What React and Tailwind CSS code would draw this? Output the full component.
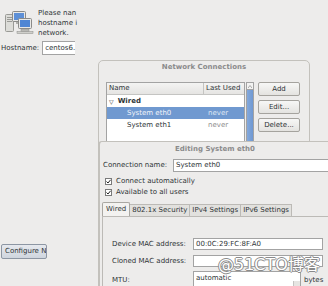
import React from 'react';

const NetIcon = () => (
  <svg width="30" height="26" viewBox="0 0 30 26">
    {/* server tower */}
    <rect x="1.5" y="5.5" width="8" height="17" rx="1" fill="#dcdcd8" stroke="#9a9a96" />
    <rect x="3" y="8" width="5" height="1" fill="#9a9a96" />
    <rect x="3" y="10" width="5" height="1" fill="#9a9a96" />
    <rect x="3" y="12" width="5" height="1" fill="#9a9a96" />
    {/* back monitor */}
    <rect x="8.5" y="2.5" width="13" height="10" rx="1" fill="#e8e8e6" stroke="#8a8a88" />
    <rect x="10" y="4" width="10" height="7" fill="#5d8fd6" />
    <rect x="12" y="13" width="6" height="2" fill="#b0b0ac" />
    {/* front monitor */}
    <rect x="14.5" y="9.5" width="13" height="10" rx="1" fill="#e8e8e6" stroke="#8a8a88" />
    <rect x="16" y="11" width="10" height="7" fill="#4f86d4" />
    <rect x="17" y="20" width="8" height="2.5" fill="#b8b8b4" stroke="#8a8a88" strokeWidth="0.5" />
    <rect x="13" y="22.5" width="16" height="2" fill="#cfcfcb" stroke="#8a8a88" strokeWidth="0.5" />
  </svg>
);

const Check = ({ label }) => (
  <div className="flex items-center h-[11px] pl-[5px]">
    <span className="w-[7px] h-[7px] shrink-0 border border-[#7a7a7a] bg-white flex items-center justify-center">
      <svg width="5" height="5" viewBox="0 0 5 5" className="block">
        <path d="M0.5 2.5 L2 4 L4.6 0.8" stroke="#222" strokeWidth="1" fill="none" />
      </svg>
    </span>
    <span className="ml-[4px]">{label}</span>
  </div>
);

const Btn = ({ children }) => (
  <div className="h-[14px] w-[42px] flex items-center justify-center rounded-[2px] border border-[#a5a39e] bg-gradient-to-b from-[#f7f7f6] to-[#e4e3e0]">
    {children}
  </div>
);

export default function App() {
  return (
    <div className="relative w-[328px] h-[286px] overflow-hidden bg-[#edeceb] text-[7px] text-[#2e3436] font-['DejaVu_Sans',sans-serif]">
      {/* installer page */}
      <div className="flex flex-col pl-[1px]">
        <div className="flex pt-[8px] pl-[3px]">
          <div className="pt-[1px]"><NetIcon /></div>
          <div className="ml-[4px] leading-[10px]">
            <div>Please nan</div>
            <div>hostname i</div>
            <div>network.</div>
          </div>
        </div>
        <div className="flex items-center mt-[3px] h-[14px]">
          <span>Hostname:</span>
          <div className="ml-[3px] w-[33px] h-[14px] bg-white border-l border-y border-[#a3a3a3] flex items-center pl-[2px]">centos6.</div>
        </div>
        <div className="mt-[189px] w-[46px] h-[15px] flex items-center pl-[3px] rounded-[2px] border border-[#8d96a3] bg-gradient-to-b from-[#e6e9ee] to-[#cfd5de] overflow-hidden whitespace-nowrap">
          Configure N
        </div>
      </div>

      {/* Network Connections window */}
      <div className="absolute left-[98px] top-[60px] w-[212px] h-[110px] rounded-[5px] border border-[#c3c1bc] bg-[#edeceb]">
        <div className="text-center font-bold text-[#8b8b8b] leading-[9px] pt-[2px]">Network Connections</div>
        <div className="flex mt-[10px] ml-[7px]">
          <div className="w-[139px] h-[60px] border border-[#a3a3a3] bg-white overflow-hidden">
            <div className="flex h-[12px] items-center bg-gradient-to-b from-[#f4f4f3] to-[#e5e4e2] border-b border-[#c4c4c2]">
              <div className="w-[97px] pl-[2px] border-r border-[#c4c4c2]">Name</div>
              <div className="pl-[2px]">Last Used</div>
            </div>
            <div className="flex h-[12px] items-center font-bold pl-[2px]">
              <span className="text-[6px] font-normal mr-[4px]">▽</span>Wired
            </div>
            <div className="flex h-[12px] items-center bg-[#7099d0] text-[#f2f5fa]">
              <div className="w-[97px] pl-[20px]">System eth0</div>
              <div className="pl-[4px] text-[#dfe7f3]">never</div>
            </div>
            <div className="flex h-[12px] items-center">
              <div className="w-[97px] pl-[20px]">System eth1</div>
              <div className="pl-[4px] text-[#8c8c8c]">never</div>
            </div>
          </div>
          <div className="ml-[1px] w-[8px] h-[60px] flex flex-col border border-[#a3a3a3] bg-[#dcdbd8]">
            <div className="h-[7px] border-b border-[#a3a3a3] bg-[#f3f3f2] flex items-center justify-center">
              <svg width="4" height="3" viewBox="0 0 4 3"><path d="M0 3 L2 0.5 L4 3" stroke="#888" fill="none" strokeWidth="0.7" /></svg>
            </div>
            <div className="flex-1 bg-gradient-to-r from-[#84a9dc] to-[#6f98d2]" />
          </div>
          <div className="ml-[4px] flex flex-col gap-[4px]">
            <Btn>Add</Btn>
            <Btn>Edit...</Btn>
            <Btn>Delete...</Btn>
          </div>
        </div>
      </div>

      {/* Editing window */}
      <div className="absolute left-[98px] top-[141px] w-[240px] h-[150px] rounded-tl-[4px] border-l-2 border-t border-[#c3c1bc] bg-[#edeceb]">
        <div className="text-center font-bold text-[#8b8b8b] leading-[9px] pt-[3px] pr-[8px]">Editing System eth0</div>
        <div className="flex items-center mt-[5px] h-[13px] pl-[3px]">
          <span className="w-[70px]">Connection name:</span>
          <div className="flex-1 h-[13px] bg-white border border-[#a3a3a3] flex items-center pl-[2px]">System eth0</div>
        </div>
        <div className="mt-[4px]">
          <Check label="Connect automatically" />
          <Check label="Available to all users" />
        </div>
        <div className="ml-[2px] mt-[4px]">
          <div className="flex items-end h-[14px]">
            <div className="h-[14px] px-[3px] flex items-center bg-[#f3f2f0] border border-b-0 border-[#a9a7a2] rounded-t-[2px]">Wired</div>
            <div className="h-[12px] px-[2px] flex items-center bg-[#e2e1de] border-t border-r border-[#bcbab6]">802.1x Security</div>
            <div className="h-[12px] px-[2px] flex items-center bg-[#e2e1de] border-t border-r border-[#bcbab6]">IPv4 Settings</div>
            <div className="h-[12px] px-[2px] flex items-center bg-[#e2e1de] border-t border-r border-[#bcbab6]">IPv6 Settings</div>
          </div>
          <div className="h-[80px] border-l border-t border-[#bcbab6] pl-[9px] pt-[21px]">
            <div className="flex items-center h-[12px]">
              <span className="w-[81px]">Device MAC address:</span>
              <div className="w-[130px] h-[12px] bg-white border border-[#a3a3a3] flex items-center pl-[2px]">00:0C:29:FC:8F:A0</div>
            </div>
            <div className="flex items-center h-[12px] mt-[5px]">
              <span className="w-[81px]">Cloned MAC address:</span>
              <div className="w-[130px] h-[12px] bg-white border border-[#a3a3a3]" />
            </div>
            <div className="flex items-start h-[16px] mt-[4px]">
              <span className="w-[81px] pt-[4px]">MTU:</span>
              <div className="w-[108px] h-[16px] bg-white border border-[#a3a3a3] flex pl-[2px] pt-[1px]">
                <span className="flex-1">automatic</span>
                <div className="w-[7px] mt-[8px] h-[6px] bg-[#e6e5e2] border-l border-[#c4c4c2]" />
              </div>
              <span className="ml-[3px] pt-[4px]">bytes</span>
            </div>
          </div>
        </div>
      </div>

      {/* watermark */}
      <div className="absolute left-[218px] top-[254px] text-[16px] leading-[22px] text-white font-['DejaVu_Sans','Noto_Sans_CJK_SC',sans-serif] [text-shadow:1px_0_0_#8a8a8a,-1px_0_0_#8a8a8a,0_1px_0_#8a8a8a,0_-1px_0_#8a8a8a]">
        @51CTO博客
      </div>
    </div>
  );
}
